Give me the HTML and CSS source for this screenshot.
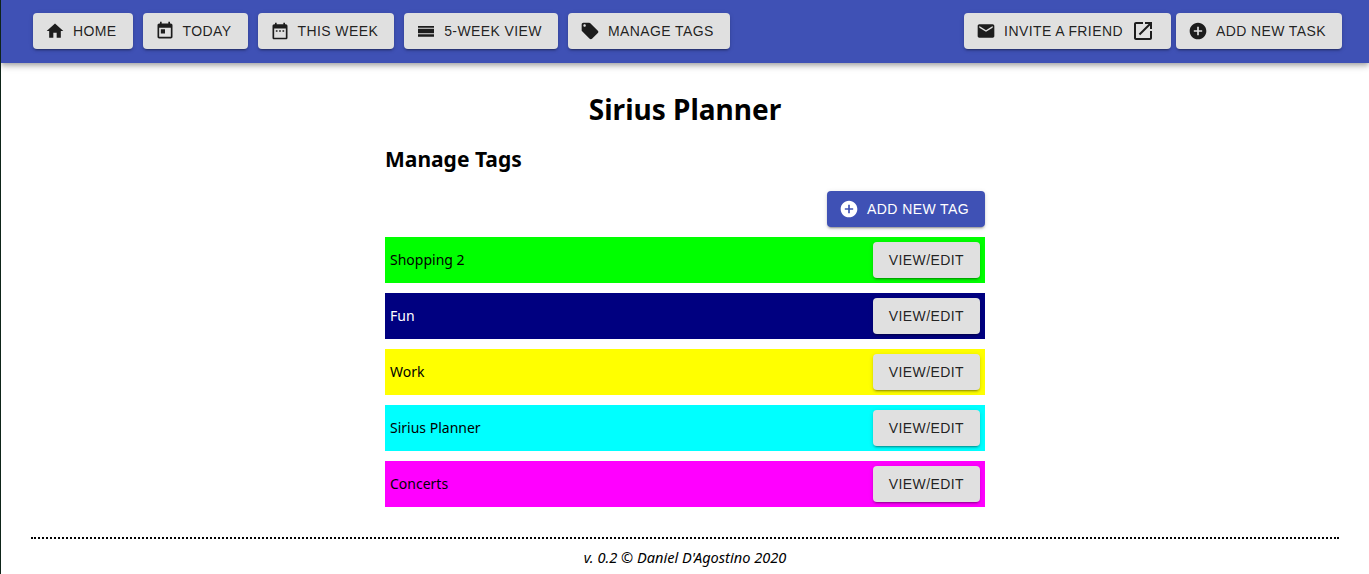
FILE: index.html
```html
<!DOCTYPE html>
<html lang="en">
<head>
    <meta charset="UTF-8">
    <meta name="viewport" content="width=device-width, initial-scale=1.0">
    <title>Sirius Planner</title>
    <link rel="stylesheet" href="styles.css">
</head>
<body>

<!-- Top navigation -->
<header class="app-bar">
    <nav class="nav-group">
        <a class="btn" href="#">
            <svg class="btn-icon" viewBox="0 0 24 24"><path d="M10 20v-6h4v6h5v-8h3L12 3 2 12h3v8z"/></svg>
            Home
        </a>
        <a class="btn" href="#">
            <svg class="btn-icon" viewBox="0 0 24 24"><path d="M19 3h-1V1h-2v2H8V1H6v2H5c-1.11 0-1.99.9-1.99 2L3 19c0 1.1.89 2 2 2h14c1.1 0 2-.9 2-2V5c0-1.1-.9-2-2-2zm0 16H5V8h14v11zM7 10h5v5H7z"/></svg>
            Today
        </a>
        <a class="btn" href="#">
            <svg class="btn-icon" viewBox="0 0 24 24"><path d="M9 11H7v2h2v-2zm4 0h-2v2h2v-2zm4 0h-2v2h2v-2zm2-7h-1V2h-2v2H8V2H6v2H5c-1.11 0-1.99.9-1.99 2L3 20c0 1.1.89 2 2 2h14c1.1 0 2-.9 2-2V6c0-1.1-.9-2-2-2zm0 16H5V9h14v11z"/></svg>
            This Week
        </a>
        <a class="btn" href="#">
            <svg class="btn-icon" viewBox="0 0 24 24"><path d="M2.4 6h19.2v2H2.4zm0 3.4h19.2v5.4H2.4zm0 6.6h19.2v3H2.4z"/></svg>
            5-Week View
        </a>
        <a class="btn" href="#">
            <svg class="btn-icon" viewBox="0 0 24 24"><path d="M21.41 11.58l-9-9C12.05 2.22 11.55 2 11 2H4c-1.1 0-2 .9-2 2v7c0 .55.22 1.05.59 1.42l9 9c.36.36.86.58 1.41.58.55 0 1.05-.22 1.41-.59l7-7c.37-.36.59-.86.59-1.41 0-.55-.23-1.06-.59-1.42zM5.5 7C4.67 7 4 6.33 4 5.5S4.67 4 5.5 4 7 4.67 7 5.5 6.33 7 5.5 7z"/></svg>
            Manage Tags
        </a>
    </nav>
    <nav class="nav-group nav-right">
        <a class="btn" href="#">
            <svg class="btn-icon" viewBox="0 0 24 24"><path d="M20 4H4c-1.1 0-1.99.9-1.99 2L2 18c0 1.1.9 2 2 2h16c1.1 0 2-.9 2-2V6c0-1.1-.9-2-2-2zm0 4l-8 5-8-5V6l8 5 8-5v2z"/></svg>
            Invite a Friend
            <svg class="btn-end-icon" viewBox="0 0 24 24"><path d="M19 19H5V5h7V3H5c-1.11 0-2 .9-2 2v14c0 1.1.89 2 2 2h14c1.1 0 2-.9 2-2v-7h-2v7zM14 3v2h3.59l-9.83 9.83 1.41 1.41L19 6.41V10h2V3h-7z"/></svg>
        </a>
        <a class="btn" href="#">
            <svg class="btn-icon" viewBox="0 0 24 24"><path d="M12 2C6.48 2 2 6.48 2 12s4.48 10 10 10 10-4.48 10-10S17.52 2 12 2zm5 11h-4v4h-2v-4H7v-2h4V7h2v4h4v2z"/></svg>
            Add New Task
        </a>
    </nav>
</header>

<main class="page">
    <h1 class="page-title">Sirius Planner</h1>

    <section class="tags">
        <h2 class="tags-title">Manage Tags</h2>

        <div class="tags-actions">
            <a class="btn btn-primary" href="#">
                <svg class="btn-icon" viewBox="0 0 24 24"><path d="M12 2C6.48 2 2 6.48 2 12s4.48 10 10 10 10-4.48 10-10S17.52 2 12 2zm5 11h-4v4h-2v-4H7v-2h4V7h2v4h4v2z"/></svg>
                Add New Tag
            </a>
        </div>

        <div class="tag-row tag-green">
            <span class="tag-name">Shopping 2</span>
            <a class="btn" href="#">View/Edit</a>
        </div>
        <div class="tag-row tag-navy">
            <span class="tag-name">Fun</span>
            <a class="btn" href="#">View/Edit</a>
        </div>
        <div class="tag-row tag-yellow">
            <span class="tag-name">Work</span>
            <a class="btn" href="#">View/Edit</a>
        </div>
        <div class="tag-row tag-cyan">
            <span class="tag-name">Sirius Planner</span>
            <a class="btn" href="#">View/Edit</a>
        </div>
        <div class="tag-row tag-magenta">
            <span class="tag-name">Concerts</span>
            <a class="btn" href="#">View/Edit</a>
        </div>
    </section>
</main>

<footer class="footer">v. 0.2 &copy; Daniel D'Agostino 2020</footer>

</body>
</html>
```

FILE: styles.css
```css
/* Page base */
html, body {
    height: 100%;
}

body {
    margin: 0;
    border-left: 1px solid #0e2419;
    background-color: #fff;
    color: #000;
    font-family: "Noto Sans", sans-serif;
    overflow: hidden;
}

/* Buttons */
.btn {
    display: inline-flex;
    align-items: center;
    height: 36px;
    box-sizing: border-box;
    padding: 0 16px;
    background-color: #e0e0e0;
    color: rgba(0, 0, 0, 0.87);
    font-family: "Liberation Sans", Arial, sans-serif;
    font-size: 14px;
    letter-spacing: 0.4px;
    text-transform: uppercase;
    text-decoration: none;
    white-space: nowrap;
    border-radius: 4px;
    box-shadow: 0 3px 1px -2px rgba(0, 0, 0, 0.2), 0 2px 2px 0 rgba(0, 0, 0, 0.14), 0 1px 5px 0 rgba(0, 0, 0, 0.12);
}

.btn-primary {
    background-color: #3f51b5;
    color: #fff;
}

.btn-icon {
    width: 20px;
    height: 20px;
    margin-left: -4px;
    margin-right: 8px;
    fill: currentColor;
}

.btn-end-icon {
    width: 24px;
    height: 24px;
    margin-left: 8px;
    fill: currentColor;
}

/* Top bar */
.app-bar {
    display: flex;
    justify-content: space-between;
    align-items: center;
    height: 63px;
    padding: 0 27px 1px 32px;
    box-sizing: border-box;
    background-color: #3f51b5;
    box-shadow: 0 2px 4px -1px rgba(0, 0, 0, 0.2), 0 4px 5px 0 rgba(0, 0, 0, 0.14), 0 1px 10px 0 rgba(0, 0, 0, 0.12);
}

.nav-group {
    display: flex;
    gap: 10px;
}

.nav-right {
    gap: 5px;
}

/* Main content */
.page-title {
    margin: 26px 0 0;
    font-size: 28px;
    line-height: 40px;
    text-align: center;
}

.tags {
    width: 600px;
    margin: 0 auto;
}

.tags-title {
    margin: 15px 0 0;
    font-size: 21px;
    line-height: 30px;
}

.tags-actions {
    display: flex;
    justify-content: flex-end;
    margin: 17px 0 10px;
}

.tag-row {
    display: flex;
    justify-content: space-between;
    align-items: center;
    height: 46px;
    margin-bottom: 10px;
    padding: 0 5px;
    box-sizing: border-box;
    font-size: 14px;
}

.tag-name {
    margin-bottom: 2px;
}

.tag-green { background-color: #0f0; }
.tag-navy { background-color: #000080; color: #fff; }
.tag-yellow { background-color: #ff0; }
.tag-cyan { background-color: #0ff; }
.tag-magenta { background-color: #f0f; }

/* Footer */
.footer {
    margin: 30px 30px 0 30px;
    padding-top: 8px;
    border-top: 2px dotted #000;
    font-size: 14.6px;
    font-style: italic;
    line-height: 20px;
    text-align: center;
}
```
